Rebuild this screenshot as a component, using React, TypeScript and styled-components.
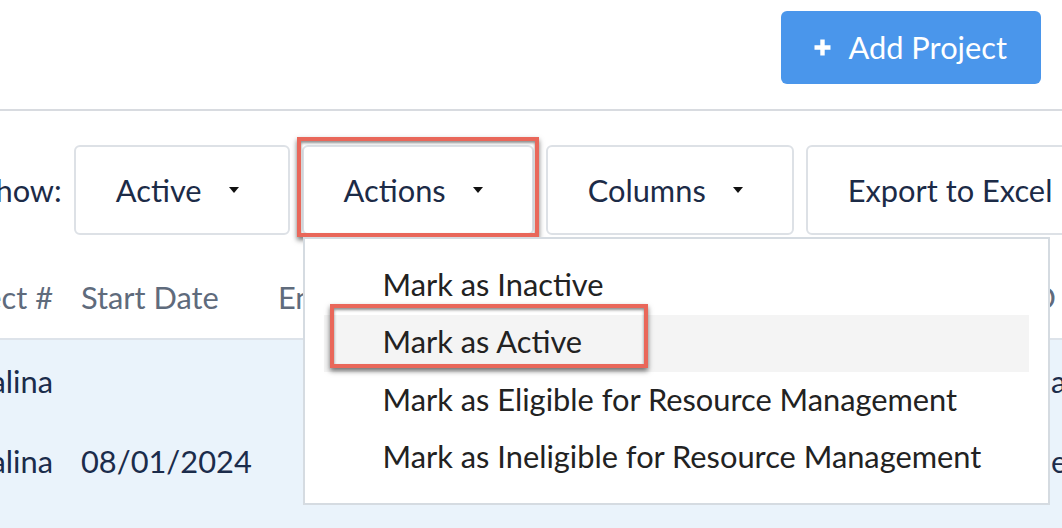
import React from "react";
import styled, { createGlobalStyle } from "styled-components";

const GlobalStyle = createGlobalStyle`
  html, body { margin: 0; padding: 0; background: #fff; }
  body { font-family: Lato, "Open Sans", "Noto Sans", sans-serif; }
  * { box-sizing: border-box; }
`;

const FONT = "30.8px";

const Page = styled.div`
  width: 1062px;
  height: 528px;
  overflow: hidden;
  position: relative;
  background: #fff;
  display: flex;
  flex-direction: column;
`;

const TopBar = styled.header`
  flex: none;
  display: flex;
  justify-content: flex-end;
  align-items: flex-start;
  height: 111px;
  padding: 11px 21px 0 0;
  border-bottom: 2px solid #d8dbe0;
`;

const PrimaryButton = styled.button`
  height: 73px;
  display: flex;
  align-items: center;
  gap: 17px;
  padding: 0 34px 0 33px;
  border: none;
  border-radius: 6px;
  background: #4a96eb;
  color: #fff;
  font-family: inherit;
  font-size: ${FONT};
`;

const Toolbar = styled.div`
  flex: none;
  display: flex;
  align-items: center;
  gap: 12px;
  padding-top: 34px;
  position: relative;
  z-index: 2;
`;

const Label = styled.span`
  font-size: ${FONT};
  color: #1c2b47;
  margin-left: -21px;
  white-space: nowrap;
`;

const ToolButton = styled.button<{ $caret?: boolean }>`
  flex: none;
  height: 90px;
  display: flex;
  align-items: center;
  padding: 0 ${(p) => (p.$caret ? "49px" : "40px")} 0 40px;
  border: 2px solid #dde1e6;
  border-radius: 6px;
  background: #fff;
  color: #1c2b47;
  font-family: inherit;
  font-size: ${FONT};
  white-space: nowrap;
`;

const Caret = styled.span`
  display: inline-block;
  width: 0;
  height: 0;
  margin-left: 27px;
  border-top: 6px solid #111;
  border-left: 5.5px solid transparent;
  border-right: 5.5px solid transparent;
`;

const DropWrap = styled.div`
  position: relative;
  flex: none;
`;

const Highlight = styled.div<{ $top: number; $left: number; $w: number; $h: number }>`
  position: absolute;
  top: ${(p) => p.$top}px;
  left: ${(p) => p.$left}px;
  width: ${(p) => p.$w}px;
  height: ${(p) => p.$h}px;
  border: 4px solid #e9675a;
  box-shadow: 0 3px 5px rgba(0, 0, 0, 0.55), inset 0 2px 3px rgba(0, 0, 0, 0.45);
  pointer-events: none;
  z-index: 3;
`;

const Menu = styled.ul`
  position: absolute;
  top: calc(100% + 2px);
  left: 1px;
  width: 747px;
  margin: 0;
  padding: 18px 19px 16px;
  list-style: none;
  background: #fff;
  border: 2px solid #d5dbe1;
  z-index: 5;
`;

const MenuItem = styled.li<{ $hover?: boolean }>`
  position: relative;
  height: 57.5px;
  padding: 9.5px 0 0 59px;
  line-height: 36px;
  font-size: ${FONT};
  color: #222;
  white-space: nowrap;
  background: ${(p) => (p.$hover ? "#f4f4f4" : "transparent")};
`;

const Table = styled.div`
  flex: 1;
  display: flex;
  flex-direction: column;
  font-size: ${FONT};
`;

const HeadRow = styled.div`
  display: grid;
  grid-template-columns: 81px 197px 746px 1fr;
  padding: 45px 0 22px;
  line-height: 36px;
  color: #5f6b7c;
  border-bottom: 2px solid #dde3ea;
  white-space: nowrap;
`;

const Body = styled.div`
  flex: 1;
  background: #eaf3fb;
`;

const Row = styled.div`
  display: grid;
  grid-template-columns: 81px 197px 746px 1fr;
  height: 80px;
  padding-top: 24px;
  line-height: 36px;
  color: #1b2c4b;
  white-space: nowrap;
`;

const Cell = styled.div<{ $end?: boolean; $indent?: number }>`
  display: flex;
  overflow: hidden;
  justify-content: ${(p) => (p.$end ? "flex-end" : "flex-start")};
  padding-right: ${(p) => (p.$end ? "28px" : "0")};
  padding-left: ${(p) => p.$indent ?? 0}px;
`;

const PlusIcon = () => (
  <svg width="17" height="17" viewBox="0 0 17 17">
    <path d="M8.5 0.5v16M0.5 8.5h16" stroke="#fff" strokeWidth="4.4" fill="none" />
  </svg>
);

const rows = [
  { client: "Catalina", start: "", last: "active" },
  { client: "Catalina", start: "08/01/2024", last: "eligible" },
];

export default function App() {
  return (
    <>
      <GlobalStyle />
      <Page>
        <TopBar>
          <PrimaryButton>
            <PlusIcon />
            Add Project
          </PrimaryButton>
        </TopBar>
        <Toolbar>
          <Label>Show:</Label>
          <ToolButton $caret>
            Active
            <Caret />
          </ToolButton>
          <DropWrap>
            <ToolButton $caret>
              Actions
              <Caret />
            </ToolButton>
            <Highlight $top={-8} $left={-5} $w={242} $h={100} />
            <Menu>
              <MenuItem>Mark as Inactive</MenuItem>
              <MenuItem $hover>
                Mark as Active
                <Highlight $top={-11} $left={6} $w={318} $h={64} />
              </MenuItem>
              <MenuItem>Mark as Eligible for Resource Management</MenuItem>
              <MenuItem>Mark as Ineligible for Resource Management</MenuItem>
            </Menu>
          </DropWrap>
          <ToolButton $caret>
            Columns
            <Caret />
          </ToolButton>
          <ToolButton>Export to Excel</ToolButton>
        </Toolbar>
        <Table>
          <HeadRow>
            <Cell $end>Project #</Cell>
            <Cell>Start Date</Cell>
            <Cell>End Date</Cell>
            <Cell>ID</Cell>
          </HeadRow>
          <Body>
            {rows.map((r, i) => (
              <Row key={i}>
                <Cell $end>{r.client}</Cell>
                <Cell>{r.start}</Cell>
                <Cell></Cell>
                <Cell $indent={27}>{r.last}</Cell>
              </Row>
            ))}
          </Body>
        </Table>
      </Page>
    </>
  );
}
